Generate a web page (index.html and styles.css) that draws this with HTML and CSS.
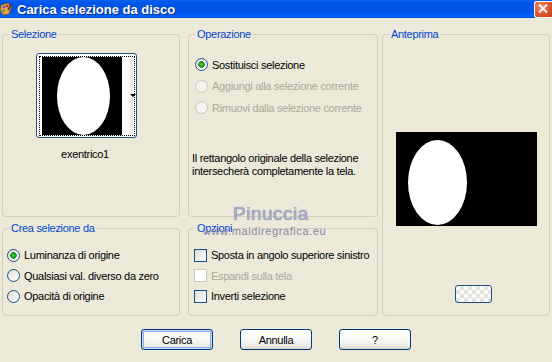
FILE: index.html
```html
<!DOCTYPE html>
<html>
<head>
<meta charset="utf-8">
<link rel="stylesheet" href="styles.css">
</head>
<body>
<div class="titlebar">
  <svg class="appicon" width="12" height="16" viewBox="0 0 12 16">
    <path d="M1 4 L8 2 L11 6 L9 13 L3 14 L0 9 Z" fill="#E8A04A" stroke="#8A4A10" stroke-width="0.8"/>
    <circle cx="4" cy="6" r="1.3" fill="#2A6BE0"/>
    <circle cx="7" cy="5" r="1.2" fill="#D02020"/>
    <circle cx="3.5" cy="10" r="1.2" fill="#20A040"/>
    <path d="M8 9 L11 3" stroke="#5A2A08" stroke-width="1.4"/>
  </svg>
  <span class="title">Carica selezione da disco</span>
  <div class="close">
    <svg width="18" height="16" viewBox="0 0 18 16"><path d="M5 4 L12 11 M12 4 L5 11" stroke="#fff" stroke-width="2" stroke-linecap="square"/></svg>
  </div>
</div>
<div class="client">
  <div class="groups">
    <fieldset class="g sel">
      <legend>Selezione</legend>
      <div class="thumbwrap">
        <div class="thumb">
          <svg class="thumbimg" width="80" height="78" viewBox="0 0 80 78">
            <rect width="80" height="78" fill="#000"/>
            <ellipse cx="41.5" cy="39" rx="26.5" ry="39" fill="#fff"/>
          </svg>
          <div class="strip"></div>
          <div class="focus"></div>
          <div class="arrow"></div>
        </div>
        <div class="caption">exentrico1</div>
      </div>
    </fieldset>

    <fieldset class="g op">
      <legend>Operazione</legend>
      <div class="opts first">
        <div class="row"><span class="rb on"></span><span>Sostituisci selezione</span></div>
        <div class="row dis"><span class="rb"></span><span>Aggiungi alla selezione corrente</span></div>
        <div class="row dis"><span class="rb"></span><span>Rimuovi dalla selezione corrente</span></div>
      </div>
      <p class="note">Il rettangolo originale della selezione<br>intersecherà completamente la tela.</p>
    </fieldset>

    <fieldset class="g prev">
      <legend>Anteprima</legend>
      <svg class="preview" width="141" height="94" viewBox="0 0 141 94">
        <rect width="141" height="94" fill="#000"/>
        <ellipse cx="41.5" cy="50.5" rx="29.5" ry="42.5" fill="#fff"/>
      </svg>
      <div class="mini"></div>
    </fieldset>

    <fieldset class="g crea">
      <legend>Crea selezione da</legend>
      <div class="opts second">
        <div class="row"><span class="rb on"></span><span>Luminanza di origine</span></div>
        <div class="row"><span class="rb"></span><span>Qualsiasi val. diverso da zero</span></div>
        <div class="row"><span class="rb"></span><span>Opacità di origine</span></div>
      </div>
    </fieldset>

    <fieldset class="g opz">
      <legend>Opzioni</legend>
      <div class="opts second">
        <div class="row"><span class="cb"></span><span>Sposta in angolo superiore sinistro</span></div>
        <div class="row dis"><span class="cb"></span><span>Espandi sulla tela</span></div>
        <div class="row"><span class="cb"></span><span>Inverti selezione</span></div>
      </div>
    </fieldset>
  </div>

  <div class="buttons">
    <div class="btn default">Carica</div>
    <div class="btn">Annulla</div>
    <div class="btn">?</div>
  </div>

  <div class="watermark">
    <div class="wm1">Pinuccia</div>
    <div class="wm2">www.maidiregrafica.eu</div>
  </div>
</div>
</body>
</html>
```
FILE: styles.css
```css
html, body {
  margin: 0;
  padding: 0;
}
body {
  width: 552px;
  height: 362px;
  overflow: hidden;
  background: #ECE9D8;
  font-family: "Liberation Sans", Arial, sans-serif;
  font-size: 11px;
  letter-spacing: -0.3px;
  color: #000;
}

.titlebar {
  height: 18px;
  display: flex;
  align-items: center;
  letter-spacing: 0;
  background: linear-gradient(to bottom, #0B62EC 0%, #0057EC 12%, #0052E2 45%, #0058EE 75%, #0068FF 90%, #0048D6 100%);
}
.appicon {
  flex: none;
  margin-left: 0;
}
.title {
  margin-left: 5px;
  color: #fff;
  font-weight: bold;
  font-size: 13px;
  text-shadow: 1px 1px 0 #0A2A8A;
  white-space: nowrap;
}
.close {
  margin-left: auto;
  width: 18px;
  height: 17px;
  box-sizing: border-box;
  border: 1px solid #fff;
  border-right: none;
  border-radius: 3px 0 0 3px;
  background: radial-gradient(circle at 35% 30%, #F08A68 0%, #E0552E 55%, #C53D1A 100%);
  display: flex;
  align-items: center;
  justify-content: center;
}
.close svg { display: block; }

.client {
  position: relative;
}
.groups {
  display: grid;
  grid-template-columns: 178px 194px 168px;
  grid-template-rows: 189px 94px;
  column-gap: 4px;
  row-gap: 5px;
  padding: 10px 0 0 2px;
}
.g {
  margin: 0;
  padding: 0;
  min-width: 0;
  box-sizing: border-box;
  border: 1px solid #D0D0BF;
  border-radius: 4px;
}
.g legend {
  margin-left: 6px;
  padding: 0 2px;
  font-size: 11px;
  line-height: 13px;
  color: #0046D5;
}
.sel { grid-column: 1; grid-row: 1; }
.op { grid-column: 2; grid-row: 1; margin-left: 4px; }
.prev { grid-column: 3; grid-row: 1 / span 2; }
.crea { grid-column: 1; grid-row: 2; }
.opz { grid-column: 2; grid-row: 2; margin-left: 4px; }

/* Selezione */
.thumbwrap {
  width: 101px;
  margin: 12px 0 0 33px;
  display: flex;
  flex-direction: column;
  align-items: center;
}
.thumb {
  position: relative;
  width: 101px;
  height: 85px;
  box-sizing: border-box;
  border: 1px solid #1C5180;
  border-radius: 3px;
  background: #fff;
  display: flex;
  align-items: flex-start;
}
.thumbimg {
  display: block;
  margin: 3px 0 0 5px;
}
.strip {
  margin-top: 3px;
  width: 11px;
  height: 77px;
  background: linear-gradient(to right, #FFFFFF 0%, #FAFAF8 60%, #E4E2DA 100%);
}
.focus {
  position: absolute;
  left: 2px;
  top: 2px;
  right: 1px;
  bottom: 1px;
  border: 1px dotted #000;
}
.arrow {
  position: absolute;
  left: 93px;
  top: 40px;
  width: 0;
  height: 0;
  border-left: 3px solid transparent;
  border-right: 3px solid transparent;
  border-top: 3px solid #000;
}
.caption {
  margin-top: 10px;
  line-height: 13px;
  margin-right: 3px;
}

/* options */
.opts.first {
  margin-top: 13px;
  margin-left: 6px;
}
.crea .opts.second {
  margin-left: 4px;
}
.opz .opts.second {
  margin-left: 5px;
}
.opts.second {
  margin-top: 10px;
}
.row {
  height: 20.5px;
  display: flex;
  align-items: center;
  gap: 4px;
  white-space: nowrap;
}
.op .row { height: 21.5px; }
.row.dis { color: #ACA899; }

.rb {
  flex: none;
  width: 13px;
  height: 13px;
  box-sizing: border-box;
  border-radius: 50%;
  border: 1px solid #1C5180;
  background: linear-gradient(135deg, #DCD9CF 0%, #EEEDE8 45%, #FFFFFF 100%);
}
.rb.on {
  background: radial-gradient(circle at 50% 50%, #5CD65C 0, #21A121 2px, #1A8A1A 3px, rgba(0,0,0,0) 3.5px),
              linear-gradient(135deg, #DCD9CF 0%, #EEEDE8 45%, #FFFFFF 100%);
}
.dis .rb {
  border-color: #CAC8BB;
  background: #F4F3EE;
}
.cb {
  flex: none;
  width: 13px;
  height: 13px;
  box-sizing: border-box;
  border: 1px solid #1C5180;
  background: linear-gradient(135deg, #DCDCD7 0%, #EDEDE9 50%, #FFFFFF 100%);
}
.dis .cb {
  border-color: #CAC8BB;
  background: #fff;
}
.note {
  margin: 33px 0 0 3px;
  line-height: 13px;
}

/* Anteprima */
.preview {
  display: block;
  margin: 91px auto 0;
}
.mini {
  width: 37px;
  height: 18px;
  box-sizing: border-box;
  margin: 59px 0 0 72px;
  border: 1px solid #1C5180;
  border-radius: 3px;
  background:
    linear-gradient(45deg, #E2E2DE 25%, transparent 25%, transparent 75%, #E2E2DE 75%),
    linear-gradient(45deg, #E2E2DE 25%, transparent 25%, transparent 75%, #E2E2DE 75%),
    #FAFAF8;
  background-size: 8px 8px;
  background-position: 0 0, 4px 4px;
}

/* buttons */
.buttons {
  margin-top: 13px;
  display: flex;
  justify-content: center;
  gap: 27px;
}
.btn {
  width: 72px;
  height: 21px;
  box-sizing: border-box;
  border: 1px solid #003C74;
  border-radius: 3px;
  background: linear-gradient(to bottom, #FFFFFF 0%, #F7F7F4 50%, #ECEBE6 85%, #D8D2C6 100%);
  display: flex;
  align-items: center;
  justify-content: center;
}
.btn.default {
  box-shadow: inset 0 0 0 1px #C5D8F7, inset 0 0 0 2px #8FB0E8;
}

/* watermark */
.watermark {
  position: absolute;
  left: 203px;
  top: 186px;
  pointer-events: none;
  letter-spacing: 0;
}
.wm1 {
  margin-left: 30px;
  font-size: 19px;
  line-height: 20px;
  letter-spacing: 0.5px;
  color: #A9A9CC;
  text-shadow: 0 0 1px #6F6F98;
}
.wm2 {
  margin-top: 1px;
  font-size: 11px;
  line-height: 12px;
  letter-spacing: 0.6px;
  color: #8585A6;
}
```
